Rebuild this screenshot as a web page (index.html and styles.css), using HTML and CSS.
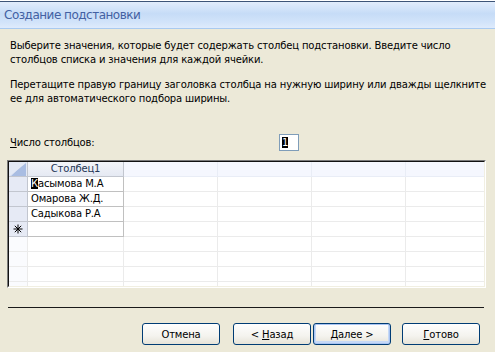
FILE: index.html
```html
<!DOCTYPE html>
<html lang="ru">
<head>
  <meta charset="UTF-8">
  <title>Создание подстановки</title>
  <link rel="stylesheet" href="styles.css">
</head>
<body>
  <div class="window">
    <div class="topStrip"></div>
    <div class="titleBar">Создание подстановки</div>

    <div class="content">
      <p class="hint">Выберите значения, которые будет содержать столбец подстановки. Введите число<br>столбцов списка и значения для каждой ячейки.</p>
      <p class="hint second">Перетащите правую границу заголовка столбца на нужную ширину или дважды щелкните<br>ее для автоматического подбора ширины.</p>

      <div class="countRow">
        <label class="countLabel"><u>Ч</u>исло столбцов:</label>
        <div class="countBox"><span class="sel">1</span></div>
      </div>

      <div class="gridOuter">
        <div class="gridInner">
          <table class="grid">
            <colgroup>
              <col class="cSel"><col class="cFirst"><col class="cCol"><col class="cCol"><col class="cCol"><col>
            </colgroup>
            <tr class="head">
              <td class="corner"><span class="tri"></span></td>
              <td class="hFirst">Столбец1</td>
              <td></td><td></td><td></td><td></td>
            </tr>
            <tr class="data">
              <td class="rowSel"></td>
              <td class="val"><span class="sel">К</span>асымова М.А</td>
              <td></td><td></td><td></td><td></td>
            </tr>
            <tr class="data">
              <td class="rowSel"></td>
              <td class="val">Омарова Ж.Д.</td>
              <td></td><td></td><td></td><td></td>
            </tr>
            <tr class="data">
              <td class="rowSel"></td>
              <td class="val">Садыкова Р.А</td>
              <td></td><td></td><td></td><td></td>
            </tr>
            <tr class="data">
              <td class="rowSel newRow">
                <svg width="10" height="10" viewBox="0 0 10 10">
                  <path d="M5 0.5V9.5M0.5 5H9.5M1.8 1.8L8.2 8.2M8.2 1.8L1.8 8.2" stroke="#000" stroke-width="1" fill="none"/>
                </svg>
              </td>
              <td class="val"></td>
              <td></td><td></td><td></td><td></td>
            </tr>
            <tr class="empty"><td></td><td></td><td></td><td></td><td></td><td></td></tr>
            <tr class="empty"><td></td><td></td><td></td><td></td><td></td><td></td></tr>
            <tr class="empty"><td></td><td></td><td></td><td></td><td></td><td></td></tr>
            <tr class="empty"><td></td><td></td><td></td><td></td><td></td><td></td></tr>
          </table>
        </div>
      </div>

      <div class="separator"></div>

      <div class="buttons">
        <button class="btn">Отмена</button>
        <button class="btn back">&lt; <u>Н</u>азад</button>
        <button class="btn next isDefault"><u>Д</u>алее &gt;</button>
        <button class="btn finish"><u>Г</u>отово</button>
      </div>
    </div>
  </div>
</body>
</html>
```

FILE: styles.css
```css
* { margin: 0; padding: 0; box-sizing: border-box; }
html, body {
  width: 495px;
  height: 352px;
  overflow: hidden;
  background: #ece9d8;
  font-family: 'DejaVu Sans', sans-serif;
  font-size: 10px;
  letter-spacing: -0.15px;
  color: #000;
}

.window {
  width: 495px;
  height: 352px;
  background: #ece9d8;
}

.topStrip {
  height: 1px;
  background: #fff;
}

.titleBar {
  height: 28px;
  border-top: 1px solid #3d5478;
  border-bottom: 1px solid #a9caf0;
  background: linear-gradient(#e1ecfc, #c6dcf7 45%, #d3e4fa 80%, #dfebfc);
  color: #4361a3;
  font-size: 12px;
  letter-spacing: -0.5px;
  line-height: 27px;
  padding-left: 4px;
}

.content {
  padding: 10px 0 0 10px;
}

.hint {
  line-height: 14px;
  white-space: nowrap;
}
.hint.second { margin-top: 11px; }

.countRow {
  display: flex;
  align-items: center;
  margin-top: 28px;
  height: 17px;
}
.countLabel { width: 269px; }
.countBox {
  width: 20px;
  height: 17px;
  border: 1px solid #7f9db9;
  background: #fff;
  padding: 1px 0 0 2px;
  line-height: 13px;
}
.sel {
  background: #000;
  color: #fff;
}

/* таблица */
.gridOuter {
  margin: 9px 0 0 -3px;
  width: 479px;
  height: 128px;
  border: 1px solid;
  border-color: #7a7a7a #fff #fff #7a7a7a;
}
.gridInner {
  height: 126px;
  border: 1px solid;
  border-color: #111 #f1efe2 #f1efe2 #111;
  background: #fff;
  overflow: hidden;
}
.grid {
  border-collapse: separate;
  border-spacing: 0;
  table-layout: fixed;
  width: 475px;
}
.cSel { width: 19px; }
.cFirst { width: 96px; }
.cCol { width: 94px; }
.grid td {
  height: 15px;
  padding: 0 0 0 3px;
  border-right: 1px solid #ebebeb;
  border-bottom: 1px solid #ebebeb;
  line-height: 14px;
  white-space: nowrap;
  overflow: hidden;
}
.grid td:last-child { border-right: none; }

.head td {
  background: #f5f7fe;
  border-color: #e9edf6;
}
.head .corner {
  background: #e3e9f5;
  border-color: #c2c6cf;
  position: relative;
  padding: 0;
}
.tri {
  position: absolute;
  left: 1px;
  top: 1px;
  width: 16px;
  height: 13px;
  background: linear-gradient(135deg, #c7d4ec 50%, #a9bde2 50%);
  clip-path: polygon(100% 0, 100% 100%, 0 100%);
}
.head .hFirst {
  background: linear-gradient(#f3f5fa, #e5e9f3);
  border-color: #c2c6cf;
  color: #243756;
  text-align: center;
  padding: 0;
}
.rowSel {
  background: #e6eaf5;
  border-right-color: #c2c6cf !important;
  border-bottom-color: #c2c6cf !important;
}
.newRow {
  padding: 0 0 0 4px !important;
  line-height: 0 !important;
}
.newRow svg { vertical-align: middle; }
.data .val {
  border-right-color: #c0c0c0;
  border-bottom-color: #c0c0c0;
}
.empty td:first-child {
  background: #fafbfe;
}

.separator {
  margin: 19px 0 0 -2px;
  width: 476px;
  border-top: 1px solid #1a1a1a;
}

.buttons {
  display: flex;
  margin: 15px 0 0 132px;
}
.btn {
  width: 78px;
  height: 22px;
  border: 1px solid #003c74;
  border-radius: 3px;
  background: linear-gradient(#fefefe, #f4f3ee 60%, #e6e3d8);
  font-family: 'DejaVu Sans', sans-serif;
  font-size: 10px;
  letter-spacing: -0.15px;
  color: #000;
}
.btn.back { margin-left: 13px; }
.btn.next { margin-left: 2px; }
.btn.finish { margin-left: 11px; }
.btn.isDefault {
  box-shadow: inset 0 0 0 1px #a9c4f2, inset 0 -1px 0 2px #c6d9f6;
}
```
